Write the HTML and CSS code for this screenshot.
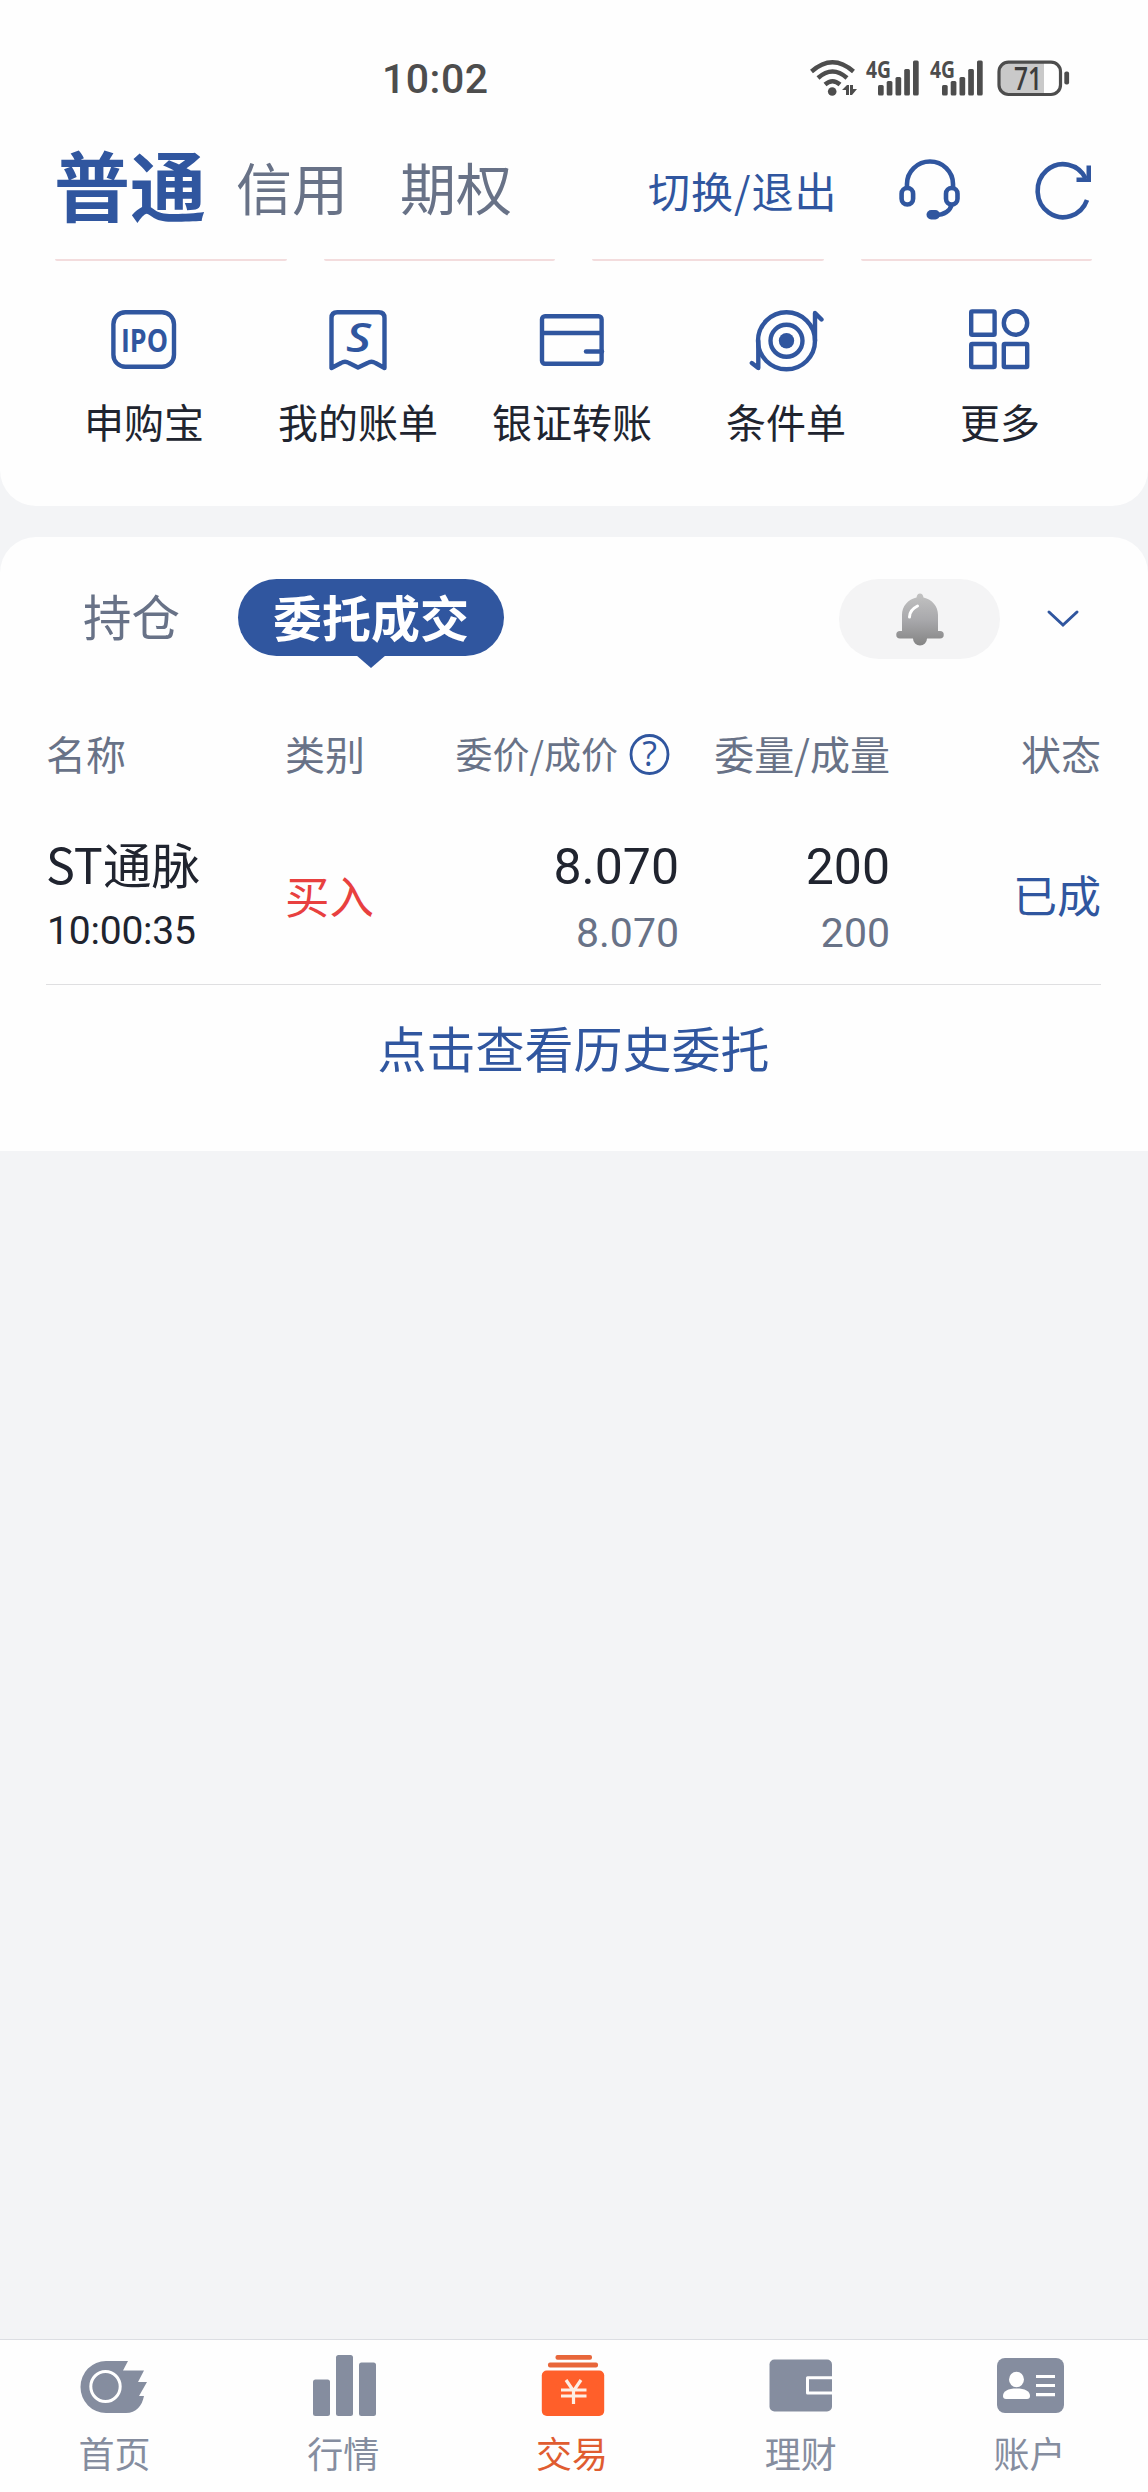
FILE: index.html
```html
<!DOCTYPE html>
<html lang="zh-CN">

<head>
  <meta charset="UTF-8">
  <meta name="viewport" content="width=device-width, initial-scale=1.0">
  <title>交易</title>
  <link rel="stylesheet" href="styles.css">
</head>

<body>
  <div class="top-card">
    <div class="status-bar">
      <span class="clock">10:02</span>
      <svg class="status-icons" width="262" height="52" viewBox="0 -6 262 52">
        <!-- wifi -->
        <g fill="none" stroke="#4d4d4d" stroke-width="4.4">
          <path d="M1.5 12.5Q22.5-6 43.5 12.5" />
          <path d="M8 19Q22.5 6 37 19" />
          <path d="M15 25.5Q22.5 19 30 25.5" />
        </g>
        <circle cx="22.2" cy="32.5" r="4.3" fill="#4d4d4d" />
        <path d="M32 31l5-5h2v10h-3v-5zM40 26h3v4h4l-5 6h-2z" fill="#4d4d4d" />
        <!-- signal -->
        <g id="signal" fill="#4d4d4d">
          <text class="network" x="56" y="18.5" textLength="25" lengthAdjust="spacingAndGlyphs">4G</text>
          <rect x="68" y="26" width="5.7" height="10.5" rx="1.5" />
          <rect x="76.7" y="22" width="5.7" height="14.5" rx="1.5" />
          <rect x="85.5" y="18" width="5.7" height="18.5" rx="1.5" />
          <rect x="94.2" y="10" width="5.7" height="26.5" rx="1.5" />
          <rect x="103" y="1.5" width="5.7" height="35" rx="1.5" />
        </g>
        <use href="#signal" x="64" />
        <!-- battery -->
        <path d="M197 4h37v31h-37a8 8 0 0 1-8-8V12a8 8 0 0 1 8-8z" fill="#c9c9c9" />
        <rect x="189" y="3.2" width="61.5" height="32.3" rx="9.5" fill="none" stroke="#4d4d4d" stroke-width="3.2" />
        <rect x="254.3" y="12.5" width="4.8" height="13" rx="2" fill="#4d4d4d" />
        <text class="battery-text" x="204" y="30.5" textLength="28" lengthAdjust="spacingAndGlyphs">71</text>
      </svg>
    </div>

    <div class="header">
      <div class="account-tabs">
        <span class="account-tab active">普通</span>
        <span class="account-tab">信用</span>
        <span class="account-tab">期权</span>
      </div>
      <a class="switch-link">切换/退出</a>
      <svg class="icon-service" width="62" height="62" viewBox="0 0 62 62">
        <g fill="none" stroke="#30569f" stroke-width="4.6">
          <path d="M8 29v-4a23 22.5 0 0 1 46 0v4" />
          <rect x="2.6" y="29" width="11.5" height="16.5" rx="5.75" />
          <rect x="47" y="29" width="11.5" height="16.5" rx="5.75" />
          <path d="M53 45q-3 11-17 11" />
        </g>
        <rect x="27.5" y="51" width="13.5" height="9.5" rx="4.7" fill="#30569f" />
      </svg>
      <svg class="icon-refresh" width="60" height="62" viewBox="0 0 60 62">
        <path d="M52 41A25.5 26.5 0 1 1 51 20" fill="none" stroke="#30569f" stroke-width="4.6" />
        <path d="M51.5 6.5h4.5v16.5H41.5v-4.5H48l3.5 1z" fill="#30569f" />
      </svg>
    </div>

    <div class="strips">
      <span></span>
      <span></span>
      <span></span>
      <span></span>
    </div>

    <div class="quick-menu">
      <div class="quick-item">
        <svg width="76" height="64" viewBox="0 0 76 64" fill="none" stroke="#30569f" stroke-width="4.4">
          <rect x="7.4" y="3.2" width="60.6" height="54.6" rx="12" />
          <text class="ipo" x="15" y="43" textLength="47" lengthAdjust="spacingAndGlyphs">IPO</text>
        </svg>
        <span>申购宝</span>
      </div>
      <div class="quick-item">
        <svg width="76" height="64" viewBox="0 0 76 64" fill="none" stroke="#30569f" stroke-width="4.4">
          <path d="M11.5 59V9q0-5.8 5.8-5.8h41.4q5.8 0 5.8 5.8v50l-9-5q-4-2.5-8 0L38 58.5l-9-4.5q-4-2.5-8 0z" stroke-linejoin="round" />
          <text class="bill-mark" x="26" y="42.5" textLength="25" lengthAdjust="spacingAndGlyphs">S</text>
        </svg>
        <span>我的账单</span>
      </div>
      <div class="quick-item">
        <svg width="76" height="64" viewBox="0 0 76 64" fill="none" stroke="#30569f" stroke-width="4.4">
          <rect x="8" y="7.2" width="59.6" height="47.6" rx="3" />
          <path d="M8 24h60" />
          <path d="M52 42.5h16" stroke-linecap="round" />
        </svg>
        <span>银证转账</span>
      </div>
      <div class="quick-item">
        <svg width="76" height="64" viewBox="0 0 76 64" fill="none" stroke="#30569f" stroke-width="4.4" stroke-linecap="round">
          <circle cx="38.5" cy="31.8" r="28.5" />
          <circle cx="38.5" cy="31.8" r="16" />
          <circle cx="38.5" cy="31.8" r="7.7" fill="#30569f" stroke="none" />
          <path d="M10.3 31.8V59l-6.5-5M67 31.8V4l6.5 6.5" stroke-linejoin="round" />
        </svg>
        <span>条件单</span>
      </div>
      <div class="quick-item">
        <svg width="76" height="64" viewBox="1 0 76 64" fill="none" stroke="#30569f" stroke-width="4.4">
          <rect x="10.2" y="2.4" width="23.4" height="23.4" rx="1" />
          <circle cx="54.5" cy="14" r="11.7" />
          <rect x="10.2" y="35" width="23.4" height="23" rx="1" />
          <rect x="42.8" y="35" width="23.4" height="23" rx="1" />
        </svg>
        <span>更多</span>
      </div>
    </div>
  </div>

  <div class="orders-card">
    <div class="tab-bar">
      <span class="tab">持仓</span>
      <span class="tab active">委托成交</span>
      <span class="bell">
        <svg width="50" height="54" viewBox="0 0 50 54">
          <defs>
            <linearGradient id="bellFill" x1="0" y1="0" x2="0" y2="1">
              <stop offset="0" stop-color="#c2c2c2" />
              <stop offset="0.5" stop-color="#a9a9ac" />
              <stop offset="1" stop-color="#848484" />
            </linearGradient>
          </defs>
          <path d="M25 1.5c2 0 3 1.5 3.5 4C37 7.5 43 14 43 23v16H45a3.7 3.7 0 0 1 0 7.5H32a7 7 0 0 1-14 0H5A3.7 3.7 0 0 1 5 39h2V23C7 14 13 7.5 21.5 5.5c.5-2.500 1.500-4 3.500-4z" fill="url(#bellFill)" />
          <path d="M14.5 25q0-7 8-11" fill="none" stroke="#fff" stroke-width="3" stroke-linecap="round" />
        </svg>
      </span>
      <svg class="chevron" width="34" height="20" viewBox="0 0 34 20">
        <path d="M3 3l14 13L31 3" fill="none" stroke="#30569f" stroke-width="3" stroke-linecap="round" />
      </svg>
    </div>

    <div class="order-grid order-head">
      <span>名称</span>
      <span>类别</span>
      <span class="head-price">
        委价/成价
        <svg width="42" height="54" viewBox="0 -7 42 54">
          <ellipse cx="20.5" cy="21.5" rx="18.5" ry="19" fill="none" stroke="#30569f" stroke-width="2.8" />
          <text class="help-mark" x="20.5" y="33" text-anchor="middle">?</text>
        </svg>
      </span>
      <span class="right">委量/成量</span>
      <span class="right">状态</span>
    </div>

    <div class="order-grid order-row">
      <div class="cell">
        <span class="name">ST通脉</span>
        <span class="time">10:00:35</span>
      </div>
      <span class="side">买入</span>
      <div class="cell numbers">
        <span class="value">8.070</span>
        <span class="sub-value">8.070</span>
      </div>
      <div class="cell numbers">
        <span class="value">200</span>
        <span class="sub-value">200</span>
      </div>
      <span class="state right">已成</span>
    </div>

    <a class="history-link">点击查看历史委托</a>
  </div>

  <div class="nav">
    <div class="nav-item">
      <svg width="72" height="70" viewBox="0 0 72 70">
        <path d="M28 11h22l-5 9.5h21l-6 11.5h9l-8 14h5C64 56 58 63 48 63H28a25.5 26 0 0 1 0-52z" fill="#858d9f" />
        <ellipse cx="27.5" cy="36.5" rx="14.7" ry="15" fill="none" stroke="#fff" stroke-width="3" />
      </svg>
      <span>首页</span>
    </div>
    <div class="nav-item">
      <svg width="72" height="70" viewBox="0 0 72 70" fill="#858d9f">
        <rect x="6" y="29.5" width="17" height="36.5" rx="2.5" />
        <rect x="29" y="5" width="17" height="61" rx="2.5" />
        <rect x="52" y="12.5" width="17" height="53.5" rx="2.5" />
      </svg>
      <span>行情</span>
    </div>
    <div class="nav-item active">
      <svg width="72" height="70" viewBox="0 0 72 70" fill="#ff5f2a">
        <rect x="19.5" y="5" width="36.5" height="4.8" rx="2" fill="#e8663a" />
        <rect x="12" y="12.5" width="50" height="5" rx="2" fill="#e8663a" />
        <rect x="5.8" y="20.5" width="62.4" height="45.5" rx="5" />
        <path d="M30 30l7.5 11L45 30M25 40h25.5M25 46h25.5M37.5 40v14" fill="none" stroke="#fdeee4" stroke-width="3.2" />
      </svg>
      <span>交易</span>
    </div>
    <div class="nav-item">
      <svg width="72" height="70" viewBox="0 0 72 70">
        <rect x="4.5" y="9.5" width="62.5" height="52" rx="5" fill="#858d9f" />
        <path d="M67.5 27.8H42.5V43h25" fill="none" stroke="#fff" stroke-width="3" stroke-linejoin="round" />
      </svg>
      <span>理财</span>
    </div>
    <div class="nav-item">
      <svg width="72" height="70" viewBox="0 0 72 70">
        <rect x="3" y="8" width="67" height="55" rx="8" fill="#858d9f" />
        <ellipse cx="22.5" cy="29.5" rx="7.5" ry="7.7" fill="#fff" />
        <path d="M9 46c0-5 5-7.5 13.5-7.5S36 41 36 46q0 3-3 3H12q-3 0-3-3z" fill="#fff" />
        <path d="M42 26.5h19M42 35.5h19M42 44.7h19" stroke="#fff" stroke-width="3.2" />
      </svg>
      <span>账户</span>
    </div>
  </div>
</body>

</html>
```
FILE: styles.css
```css
* {
  margin: 0;
  padding: 0;
  box-sizing: border-box;
}

body {
  font-family: "Noto Sans CJK SC", "Noto Sans", sans-serif;
  background: #f3f4f6;
  color: #20242f;
  min-height: 100vh;
  display: flex;
  flex-direction: column;
}

svg {
  display: block;
  flex-shrink: 0;
  overflow: visible;
}

.right {
  text-align: right;
}

.top-card {
  background: #fefefe;
  height: 506px;
  border-radius: 0 0 36px 36px;
}

/* status bar */
.status-bar {
  display: flex;
  align-items: center;
  justify-content: space-between;
  height: 120px;
  padding: 38px 76px 0 382px;
}

.clock {
  font-family: Roboto, sans-serif;
  font-size: 41px;
  font-weight: 500;
  letter-spacing: 0.5px;
  color: #4d4d4d;
}

.network {
  font-family: "Open Sans", sans-serif;
  font-size: 23px;
  font-weight: 700;
}

.battery-text {
  font-family: "Open Sans", sans-serif;
  font-size: 32px;
  font-weight: 600;
  fill: #3c3c3c;
}

/* header */
.header {
  display: flex;
  align-items: center;
  height: 139px;
  padding: 0 53px 0 54px;
  color: #30569f;
}

.account-tabs {
  display: flex;
  align-items: center;
}

.account-tab {
  font-size: 56px;
  line-height: 80px;
  color: #687287;
  margin-right: 52px;
  margin-bottom: 7px;
}

.account-tab.active {
  font-size: 76px;
  font-weight: 700;
  color: #30569f;
  margin-right: 30px;
  margin-bottom: 14px;
}

.switch-link {
  font-size: 42px;
  line-height: 60px;
  letter-spacing: 1px;
  margin-left: 84px;
}

.icon-service {
  margin-left: auto;
}

.icon-refresh {
  margin-left: 74px;
}

.strips {
  display: grid;
  grid-template-columns: repeat(4, 1fr);
  gap: 37px;
  padding: 0 56px 0 55px;
}

.strips span {
  height: 2px;
  background: #f3dcdd;
  border-radius: 0 0 8px 8px;
}

/* quick menu */
.quick-menu {
  display: grid;
  grid-template-columns: repeat(5, 1fr);
  padding: 48px 41px 0 37px;
}

.quick-item {
  display: flex;
  flex-direction: column;
  align-items: center;
  gap: 18px;
  font-size: 40px;
  line-height: 60px;
  white-space: nowrap;
}

.ipo {
  font-family: "Open Sans", sans-serif;
  font-size: 32px;
  font-weight: 700;
  fill: #30569f;
  stroke: none;
}

.bill-mark {
  font-family: "Open Sans", sans-serif;
  font-size: 39px;
  font-weight: 600;
  font-style: italic;
  fill: #30569f;
  stroke: none;
}

/* orders */
.orders-card {
  background: #fefefe;
  height: 614px;
  margin-top: 31px;
  padding: 42px 47px 0 46px;
  border-radius: 36px 36px 0 0;
}

.tab-bar {
  display: flex;
  align-items: flex-start;
  height: 80px;
  padding: 0 21px 0 37px;
}

.tab {
  font-size: 48.5px;
  line-height: 73px;
  color: #687287;
}

.tab.active {
  position: relative;
  width: 266px;
  height: 77px;
  margin-left: 58px;
  border-radius: 39px;
  background: #30569f;
  color: #fff;
  font-size: 49px;
  font-weight: 700;
  text-align: center;
}

.tab.active::after {
  content: "";
  position: absolute;
  top: 76px;
  left: 118px;
  border: 15px solid transparent;
  border-top: 13px solid #30569f;
  border-bottom: 0;
}

.bell {
  display: flex;
  align-items: center;
  justify-content: center;
  width: 161px;
  height: 80px;
  margin-left: auto;
  border-radius: 40px;
  background: #f4f4f5;
}

.chevron {
  margin: 30px 0 0 46px;
}

.order-grid {
  display: grid;
  grid-template-columns: 239px 141px 253px 211px 211px;
  align-items: center;
}

.order-head {
  margin-top: 64px;
  height: 60px;
  font-size: 40px;
  line-height: 60px;
  color: #687287;
}

.head-price {
  display: flex;
  align-items: center;
  justify-content: flex-end;
  gap: 11px;
  padding-right: 8px;
  font-size: 37px;
  white-space: nowrap;
}

.help-mark {
  font-family: "Open Sans", sans-serif;
  font-size: 34px;
  fill: #30569f;
}

.order-row {
  height: 202px;
  padding: 46px 0 21px;
  border-bottom: 1px solid #dfdfe1;
}

.cell {
  display: flex;
  flex-direction: column;
  gap: 6px;
  line-height: 60px;
}

.name {
  font-size: 48.5px;
}

.time,
.value,
.sub-value {
  font-family: Roboto, sans-serif;
}

.time {
  font-size: 39px;
  line-height: 65px;
  letter-spacing: -0.2px;
  margin-bottom: -5px;
  padding-left: 1px;
}

.numbers {
  margin-top: 8px;
  text-align: right;
}

.value {
  font-size: 50px;
}

.sub-value {
  font-size: 41px;
  color: #687287;
}

.side {
  font-size: 44.5px;
  color: #e8403f;
  margin-bottom: 4px;
}

.state {
  font-size: 44px;
  color: #30569f;
  margin-bottom: 4px;
}

.history-link {
  display: block;
  font-size: 49px;
  line-height: 124px;
  text-align: center;
  color: #30569f;
}

/* bottom nav */
.nav {
  display: grid;
  grid-template-columns: repeat(5, 1fr);
  height: 153px;
  margin-top: auto;
  padding: 10px 4px 0 0;
  background: #fefefe;
  border-top: 1px solid #dcdee3;
}

.nav-item {
  display: flex;
  flex-direction: column;
  align-items: center;
  gap: 12px;
  font-size: 36px;
  line-height: 40px;
  color: #858d9f;
}

.nav-item.active {
  color: #e05c30;
}
```
